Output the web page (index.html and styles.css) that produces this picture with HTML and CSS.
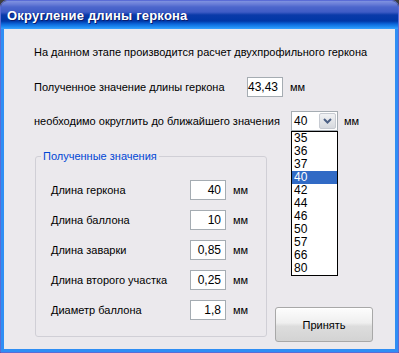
FILE: index.html
```html
<!DOCTYPE html>
<html lang="ru">
<head>
  <meta charset="UTF-8">
  <meta name="viewport" content="width=device-width, initial-scale=1">
  <title>Округление длины геркона</title>
  <link rel="stylesheet" href="styles.css">
</head>
<body>
  <div class="window">
    <div class="titlebar">Округление длины геркона</div>

    <div class="client">
      <div class="row">На данном этапе производится расчет двухпрофильного геркона</div>

      <div class="row">
        <span class="label label-len">Полученное значение длины геркона</span>
        <span class="field">43,43</span>
        <span class="unit">мм</span>
      </div>

      <div class="row">
        <span class="label label-round">необходимо округлить до ближайшего значения</span>
        <div class="combo">
          <span class="combo-value">40</span>
          <span class="combo-btn">
            <svg width="9" height="6" viewBox="0 0 9 6"><path d="M1 1 L4.5 4.5 L8 1" fill="none" stroke="#4d6185" stroke-width="2"/></svg>
          </span>
          <ul class="combo-list">
            <li>35</li>
            <li>36</li>
            <li>37</li>
            <li class="selected">40</li>
            <li>42</li>
            <li>44</li>
            <li>46</li>
            <li>50</li>
            <li>57</li>
            <li>66</li>
            <li>80</li>
          </ul>
        </div>
        <span class="unit unit-combo">мм</span>
      </div>

      <div class="bottom">
        <fieldset class="group">
          <legend>Полученные значения</legend>
          <div class="group-rows">
            <div class="grow">
              <span class="glabel">Длина геркона</span>
              <span class="field">40</span>
              <span class="unit">мм</span>
            </div>
            <div class="grow">
              <span class="glabel">Длина баллона</span>
              <span class="field">10</span>
              <span class="unit">мм</span>
            </div>
            <div class="grow">
              <span class="glabel">Длина заварки</span>
              <span class="field">0,85</span>
              <span class="unit">мм</span>
            </div>
            <div class="grow">
              <span class="glabel">Длина второго участка</span>
              <span class="field">0,25</span>
              <span class="unit">мм</span>
            </div>
            <div class="grow">
              <span class="glabel">Диаметр баллона</span>
              <span class="field">1,8</span>
              <span class="unit">мм</span>
            </div>
          </div>
        </fieldset>
        <button class="btn">Принять</button>
      </div>
    </div>
  </div>
</body>
</html>
```

FILE: styles.css
```css
html {
  background-color: #3f3f3f;
}

body {
  margin: 0;
  font-family: 'Liberation Sans', Arial, sans-serif;
  font-size: 11px;
  color: #000;
}

.window {
  width: 399px;
  height: 353px;
  box-sizing: border-box;
  border: 1px solid #5a6cd6;
  border-radius: 7px 7px 0 0;
  overflow: hidden;
  display: flex;
  flex-direction: column;
}

.titlebar {
  height: 28px;
  box-sizing: border-box;
  padding: 2px 0 0 6px;
  line-height: 26px;
  font-size: 13px;
  font-weight: bold;
  letter-spacing: 0.2px;
  color: #fff;
  text-shadow: 1px 1px 0 #0b1d6e;
  background: linear-gradient(to bottom,
    #7f92e0 0px, #6a7ed8 3px, #4c66cc 6px, #3f5cc6 11px,
    #0a3aa9 14px, #0037a6 20px, #0b66da 23px, #1f8cf2 26px, #3aa2ff 28px);
}

.client {
  flex: 1;
  background-color: #ebe9ed;
  border: 3px solid #2f8ef4;
  border-top: none;
  padding: 6px 0 0 30px;
}

.row {
  height: 34px;
  display: flex;
  align-items: center;
  white-space: nowrap;
}

.row:nth-child(2) {
  padding-top: 1px;
}

.label-len {
  width: 213px;
}

.label-round {
  width: 257px;
}

.field {
  width: 36px;
  height: 20px;
  box-sizing: border-box;
  border: 1px solid #a5acb2;
  background-color: #fff;
  text-align: right;
  padding-right: 4px;
  line-height: 18px;
  font-size: 12px;
}

.unit {
  margin-left: 7px;
}

.unit-combo {
  margin-left: 6px;
}

/* комбобокс с раскрытым списком */
.combo {
  position: relative;
  width: 47px;
  height: 20px;
  box-sizing: border-box;
  border: 1px solid #a5acb2;
  background-color: #fff;
  display: flex;
  align-items: center;
  justify-content: space-between;
}

.combo-value {
  padding-left: 2px;
  font-size: 12px;
}

.combo-btn {
  width: 17px;
  height: 16px;
  margin-right: 1px;
  box-sizing: border-box;
  border: 1px solid #c7cbd2;
  border-radius: 2px;
  background: linear-gradient(to bottom, #f1f2f4, #d6d9de);
  display: flex;
  align-items: center;
  justify-content: center;
}

.combo-list {
  position: absolute;
  top: 19px;
  left: -1px;
  width: 47px;
  box-sizing: border-box;
  margin: 0;
  padding: 0;
  list-style: none;
  border: 1px solid #000;
  background-color: #fff;
  z-index: 10;
}

.combo-list li {
  height: 13px;
  line-height: 13px;
  padding-left: 2px;
  font-size: 12px;
}

.combo-list li.selected {
  background-color: #316ac5;
  color: #fff;
}

.bottom {
  display: flex;
  align-items: flex-end;
  margin-top: 12px;
}

.group {
  width: 232px;
  box-sizing: border-box;
  margin: 0 0 5px 1px;
  padding: 0;
  border: 1px solid #d0cfd6;
  border-radius: 3px;
}

.group legend {
  margin-left: 5px;
  padding: 0 2px;
  color: #0046d5;
  line-height: 13px;
}

.group-rows {
  padding: 12px 0 11px 15px;
}

.grow {
  height: 30px;
  display: flex;
  align-items: center;
  white-space: nowrap;
}

.glabel {
  width: 139px;
}

.btn {
  width: 98px;
  height: 35px;
  margin: 0 0 0 8px;
  font-family: 'Liberation Sans', Arial, sans-serif;
  font-size: 11px;
  color: #000;
  border: 1px solid #a8a8a8;
  border-radius: 3px;
  background: linear-gradient(to bottom, #fdfdfd 0%, #efefef 45%, #dddddd 55%, #d3d3d3 100%);
  box-shadow: inset 0 1px 0 #fff;
}
```
